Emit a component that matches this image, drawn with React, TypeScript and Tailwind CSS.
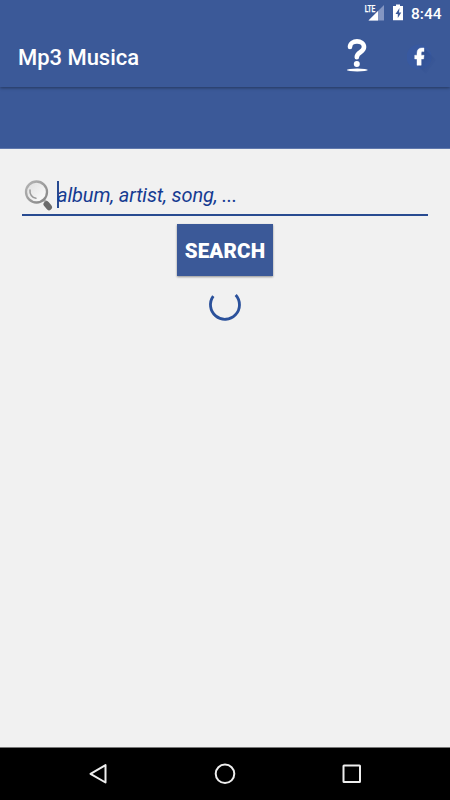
import React from "react";

function StatusBar() {
  return (
    <div className="flex h-7 shrink-0 items-start justify-end pr-[9px]">
      <svg width="46" height="28" viewBox="364 0 46 28">
        <path d="M384 5v15.500h-15.500z" fill="#8496c2" />
        <path d="M378 11v9.500h-9.500z" fill="#fff" />
        <text x="364.800" y="12" fontSize="8.500" fontWeight="500" stroke="#fff" strokeWidth=".25" textLength="10.500" lengthAdjust="spacingAndGlyphs" fill="#fff">LTE</text>
        <path d="M396 4.500h4v1.500h3v14.200h-10V6h3z" fill="#fff" />
        <path d="M399.500 8l-4 6h2.300v4l3.500-5.600H399z" fill="#3b5998" />
      </svg>
      <span className="ml-px mt-[5px] w-[30px] whitespace-nowrap text-[15.500px] font-medium leading-[18px]">8:44</span>
    </div>
  );
}

function Toolbar() {
  return (
    <header className="flex h-[59px] shrink-0 items-center pl-[18px] shadow-[0_1px_3px_rgba(0,0,0,0.4)] [clip-path:inset(0_0_-5px_0)]">
      <h1 className="grow pt-px text-[22px] font-medium leading-[26px] tracking-[-0.03px]">Mp3 Musica</h1>
      <svg width="28" height="41" viewBox="343 37 28 41" className="mr-[36px]">
        <path d="M350 47C350 39.500 364 39.500 364 47C364 52.500 356.800 52 356.800 57.200" fill="none" stroke="#fff" strokeWidth="4.600" strokeLinecap="round" />
        <circle cx="356.800" cy="63.900" r="3" fill="#fff" />
        <ellipse cx="357.300" cy="70" rx="10.500" ry="1.400" fill="#fff" />
      </svg>
      <svg width="43" height="41" viewBox="407 37 43 41">
        <defs>
          <linearGradient id="shade" x1="0" y1="0" x2="1" y2="1">
            <stop offset="0" stopColor="#263f75" stopOpacity=".6" />
            <stop offset="1" stopColor="#315198" stopOpacity="0" />
          </linearGradient>
        </defs>
        <circle cx="419" cy="57" r="12.500" fill="#3859a0" />
        <path d="M424 48l12 12-10 14-9-9z" fill="url(#shade)" />
        <path d="M417 65.300v-6.300H414.700v-3.800h2.300v-2.200c0-3.400 1.900-5.100 4.800-5.100h2.200v3.700h-1.300c-1.200 0-1.500.6-1.500 1.500v2.100h2.900l-.5 3.800h-2.400v6.300z" fill="#fff" stroke="#fff" strokeWidth=".4" strokeLinejoin="round" />
      </svg>
    </header>
  );
}

function SearchField() {
  return (
    <div className="mx-[22px] mt-[29px] flex h-[38px] items-start border-b-2 border-[#284b91]">
      <svg width="35" height="36" viewBox="22 178 35 36" className="shrink-0">
        <defs>
          <linearGradient id="rim" x1="0" y1="0" x2="1" y2="1">
            <stop offset="0" stopColor="#b5b5b5" />
            <stop offset="1" stopColor="#858585" />
          </linearGradient>
          <linearGradient id="glass" x1="0" y1="0" x2="1" y2="1">
            <stop offset="0" stopColor="#dedede" />
            <stop offset="1" stopColor="#fff" />
          </linearGradient>
        </defs>
        <path d="M43.500 199.500l4 4" stroke="#b0b0b0" strokeWidth="3" />
        <path d="M46.500 204.200l2.500 3" stroke="#6b6b6b" strokeWidth="6" strokeLinecap="round" />
        <circle cx="36.500" cy="192" r="10.500" fill="url(#glass)" stroke="url(#rim)" strokeWidth="2.300" />
        <path d="M30 190c-.5 4 2 8 6 8.300" fill="none" stroke="#999" strokeWidth="1.500" strokeLinecap="round" />
      </svg>
      <span className="mt-[3px] h-[27px] w-[2px] shrink-0 bg-[#284b91]" />
      <span className="-ml-[2px] mt-[5px] whitespace-nowrap text-[20px] italic leading-6 tracking-[-0.12px] text-[#163b91]">album, artist, song, ...</span>
    </div>
  );
}

function NavigationBar() {
  return (
    <nav className="flex h-[53px] shrink-0 items-center justify-between border-t border-[#777] bg-black px-[86px]">
      <svg width="24" height="24" viewBox="0 0 24 24" fill="none" stroke="#eee" strokeWidth="2" strokeLinejoin="round">
        <path d="M4.500 11.800l15-8.700v17.400z" />
      </svg>
      <svg width="24" height="24" viewBox="0 0 24 24" fill="none" stroke="#eee" strokeWidth="2">
        <circle cx="12" cy="11.800" r="9.300" />
      </svg>
      <svg width="24" height="24" viewBox="0 0 24 24" fill="none" stroke="#eee" strokeWidth="2">
        <rect x="3.500" y="3.500" width="16.500" height="16.500" rx=".5" />
      </svg>
    </nav>
  );
}

export default function App() {
  return (
    <div className="flex h-[800px] w-[450px] flex-col overflow-hidden bg-[#f1f1f1] font-['Roboto',sans-serif]">
      <div className="flex h-[149px] shrink-0 flex-col border-b border-[#6078ac] bg-[#3b5998] text-white">
        <StatusBar />
        <Toolbar />
      </div>
      <main className="flex grow flex-col">
        <SearchField />
        <button className="mt-2 flex h-[52px] w-24 items-center justify-center self-center bg-[#3b5998] pt-[2px] text-[20.500px] font-black tracking-[0.2px] text-white shadow-[0_1px_2px_rgba(0,0,0,0.4)]">SEARCH</button>
        <svg width="36" height="36" viewBox="207 287 36 36" className="mt-[11px] self-center">
          <path d="M213.300 296.200A14.500 14.500 0 1 0 235.700 295" fill="none" stroke="#2b519b" strokeWidth="2.800" />
        </svg>
      </main>
      <NavigationBar />
    </div>
  );
}
